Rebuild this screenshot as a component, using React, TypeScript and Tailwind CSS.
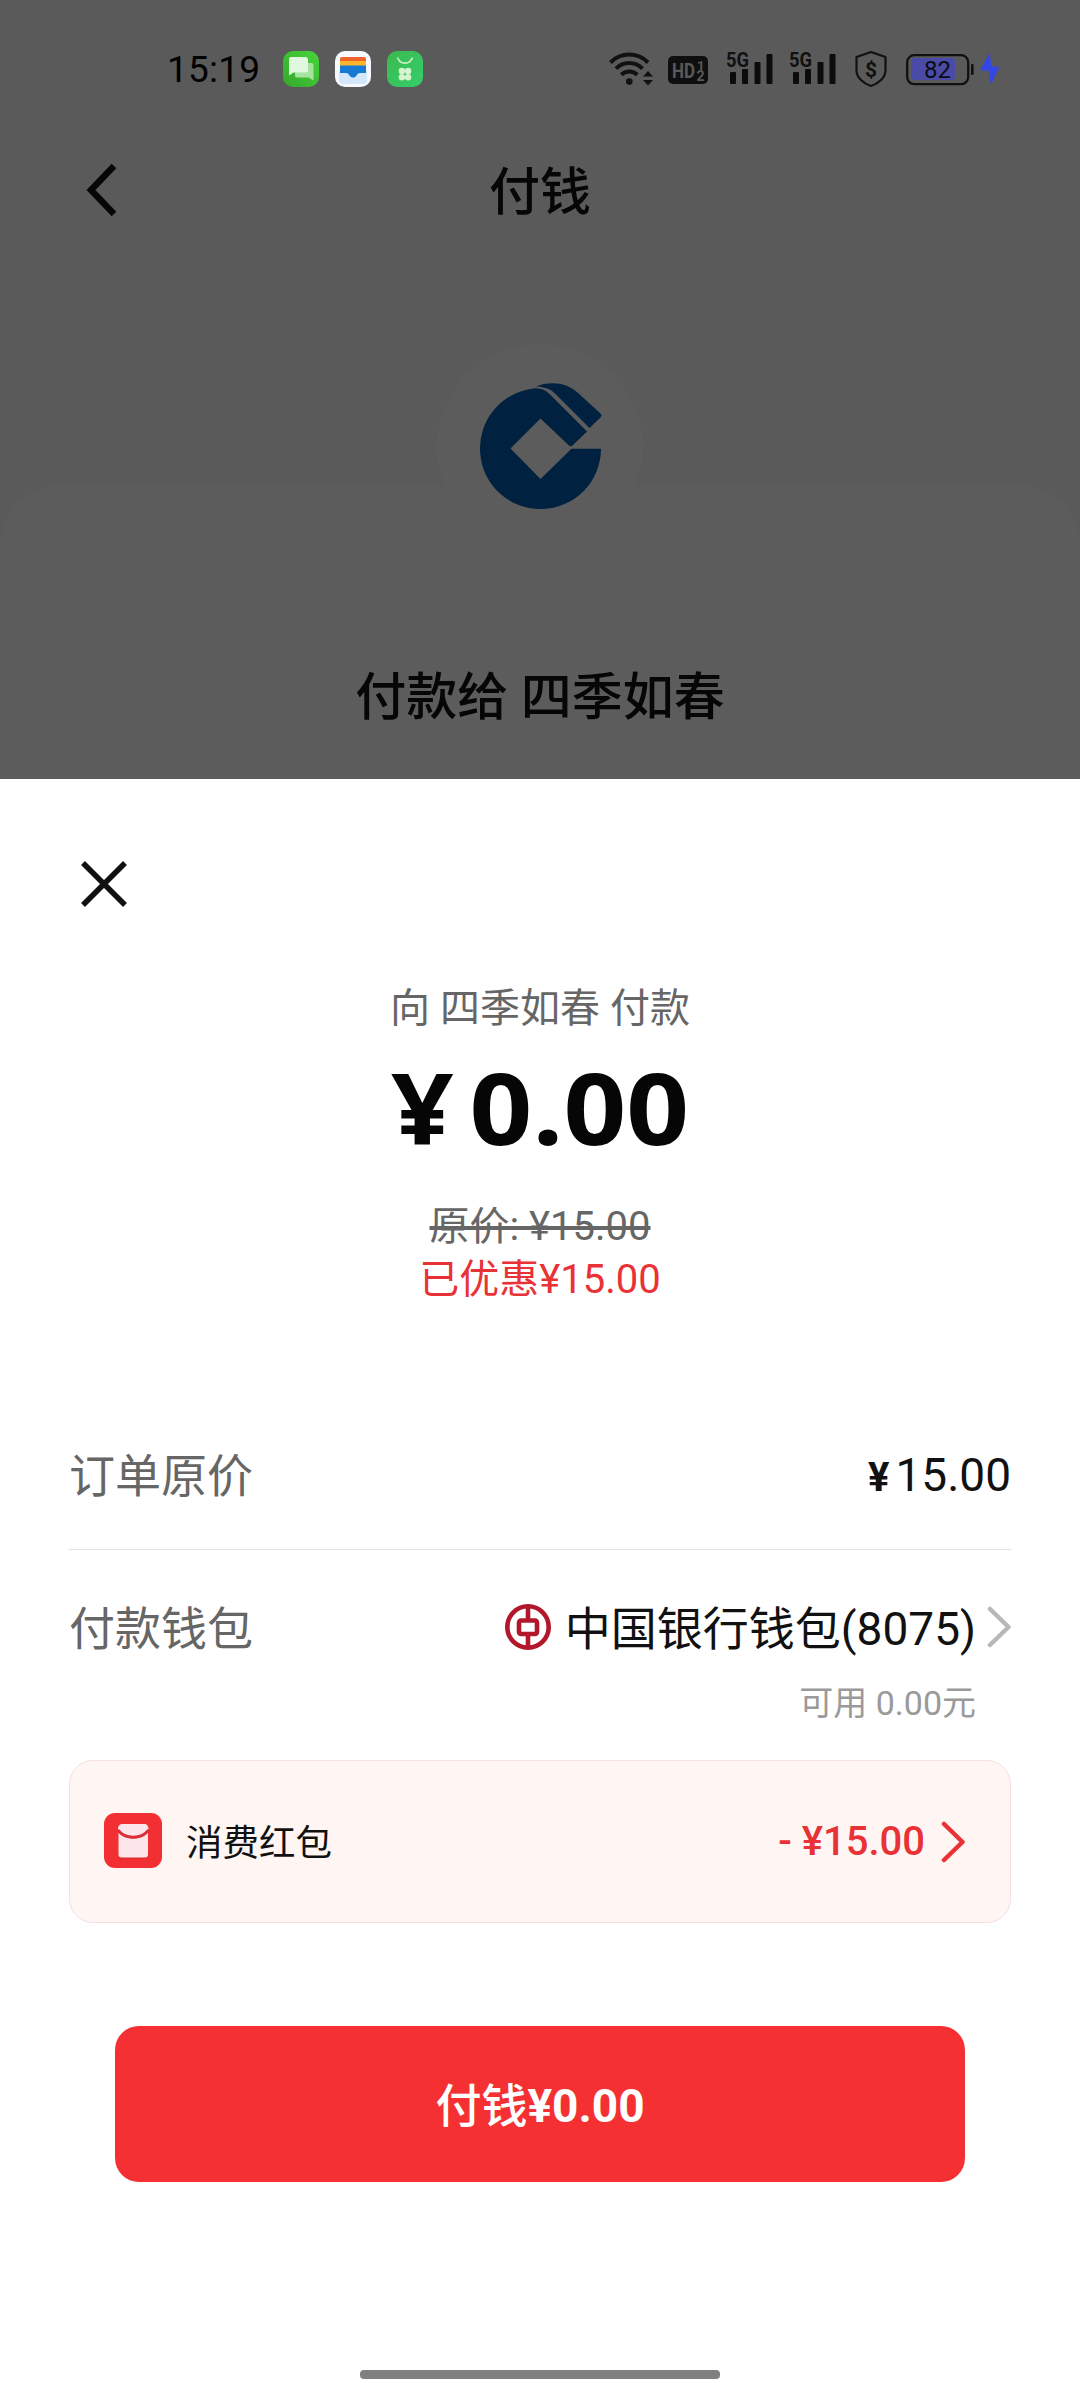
import React from 'react';

const payee = '四季如春';

const MessageAppIcon = () => (
  <svg width="36" height="36" viewBox="0 0 36 36">
    <defs>
      <linearGradient id="msg" x1="1" y1="0" x2="0" y2="1">
        <stop offset="0" stopColor="#46d63a" />
        <stop offset="1" stopColor="#35a82c" />
      </linearGradient>
    </defs>
    <rect width="36" height="36" rx="10" fill="url(#msg)" />
    <path d="M14 12h14.5a2 2 0 0 1 2 2v15.500l-5-3H14a2 2 0 0 1-2-2V14a2 2 0 0 1 2-2z" fill="#a5e39f" />
    <path d="M8 6h14.500a2.500 2.500 0 0 1 2.500 2.500V19a2.500 2.500 0 0 1-2.500 2.500H10.500L6 24.500V8a2 2 0 0 1 2-2z" fill="#e2f7df" />
  </svg>
);

const WalletAppIcon = () => (
  <svg width="36" height="36" viewBox="0 0 36 36">
    <rect width="36" height="36" rx="10" fill="#f5f8fd" />
    <path d="M4 20h28v9a4 4 0 0 1-4 4H8a4 4 0 0 1-4-4z" fill="#d3e8fa" />
    <path d="M5 11V8a2 2 0 0 1 2-2h22a2 2 0 0 1 2 2v3z" fill="#f0622a" />
    <path d="M5 10h26v6H5z" fill="#fcb62c" />
    <path d="M5 14.500h26V22h-6c-2 0-2.500 1-3.500 2.500-1.600 2.800-5.400 2.800-7 0C13.500 23 13 22 11 22H5z" fill="#1779d4" />
  </svg>
);

const CloverAppIcon = () => (
  <svg width="36" height="36" viewBox="0 0 36 36">
    <defs>
      <linearGradient id="clover" x1="0" y1="0" x2="1" y2="1">
        <stop offset="0" stopColor="#3cb84e" />
        <stop offset="1" stopColor="#35cf6c" />
      </linearGradient>
    </defs>
    <rect width="36" height="36" rx="10" fill="url(#clover)" />
    <path d="M10.500 6.500c2.500 7.500 12.500 7.500 15 0" fill="none" stroke="#c9f2c4" strokeWidth="1.600" />
    <g fill="#d5f5cf">
      <circle cx="14.900" cy="20" r="3.200" />
      <circle cx="21.100" cy="20" r="3.200" />
      <circle cx="14.900" cy="26.200" r="3.200" />
      <circle cx="21.100" cy="26.200" r="3.200" />
    </g>
  </svg>
);

const WifiIcon = () => (
  <svg width="44" height="36" viewBox="0 0 44 36">
    <g fill="none" stroke="#111" strokeWidth="4">
      <path d="M1.500 11.500a26 26 0 0 1 37.500 0" />
      <path d="M7 17.700a18.500 18.500 0 0 1 26.500 0" />
      <path d="M12.300 23.700a11.500 11.500 0 0 1 16 0" />
    </g>
    <circle cx="20.300" cy="30.600" r="3.300" fill="#111" />
    <path d="M34 25.500l5-5.500 5 5.500zM34 29h10l-5 5.500z" fill="#111" />
  </svg>
);

const HdIcon = () => (
  <svg width="40" height="28" viewBox="0 0 40 28">
    <rect width="40" height="28" rx="5" fill="#0f0f0f" />
    <text x="4" y="21.500" fontFamily="Roboto, sans-serif" fontWeight="700" fontSize="20" textLength="23" lengthAdjust="spacingAndGlyphs" fill="#5a5a5a">HD</text>
    <text x="29" y="13.500" fontFamily="Roboto, sans-serif" fontWeight="700" fontSize="13" fill="#5a5a5a">1</text>
    <text x="28.500" y="24.800" fontFamily="Roboto, sans-serif" fontWeight="700" fontSize="14" fill="#5a5a5a">2</text>
  </svg>
);

const SignalIcon = () => (
  <svg width="47" height="48" viewBox="0 -6 47 48">
    <text x="0" y="16" fontFamily="Roboto, sans-serif" fontWeight="700" fontSize="20" textLength="23" lengthAdjust="spacingAndGlyphs" fill="#111">5G</text>
    <g fill="#0c0c0c">
      <rect x="4" y="21" width="6" height="12" rx="1" />
      <rect x="16" y="18" width="6" height="15" rx="1" />
      <rect x="28.500" y="11" width="6" height="22" rx="1" />
      <rect x="40.500" y="3" width="6" height="30" rx="1" />
    </g>
  </svg>
);

const ShieldIcon = () => (
  <svg width="34" height="38" viewBox="0 0 34 38">
    <path d="M17 2l14.500 5v13c0 8-7 13.500-14.500 16C9.500 33.500 2.500 28 2.500 20V7z" fill="none" stroke="#111" strokeWidth="2.200" strokeLinejoin="round" />
    <text x="17" y="26.500" textAnchor="middle" fontFamily="Roboto, sans-serif" fontWeight="700" fontSize="21" fill="#111">$</text>
  </svg>
);

const BatteryIcon = () => (
  <svg width="96" height="36" viewBox="0 0 96 36">
    <rect x="5" y="7" width="44" height="22" rx="3" fill="#4a4ba6" />
    <rect x="1.200" y="4.200" width="61" height="29" rx="7" fill="none" stroke="#111" strokeWidth="2.300" />
    <rect x="65" y="13" width="2.600" height="11" rx="1" fill="#111" />
    <text x="31.500" y="27" textAnchor="middle" fontFamily="Roboto, sans-serif" fontSize="24" fill="#0b0b14">82</text>
    <path d="M83.500 1.500L74 19.500h8.500L85 34l8.500-18.500h-8z" fill="#3446e4" />
  </svg>
);

const CcbLogo = () => (
  <svg width="122" height="128" viewBox="0 0 122 128" fill="#00213f">
    <path d="M53.500 5.500C60 4.700 65.500 7 70 11.500l37 37L92.500 62.500a3 3 0 0 1-3.500 0L60.500 35.500 30.500 65.500l30 30.500L91.500 65.800h29.500A60.500 60.500 0 1 1 53.500 5.500z" />
    <path d="M55.500 3.500C70-2.500 87-.500 97.500 9.500L120.500 30.500a3 3 0 0 1 0 4L109.500 45 75 10.500C70 5.500 63 3.500 55.500 3.500z" />
  </svg>
);

const BocLogo = () => (
  <svg width="46" height="46" viewBox="0 0 46 46" fill="none" stroke="#b3172b">
    <circle cx="23" cy="23" r="20.700" strokeWidth="4.600" />
    <rect x="14" y="16.500" width="18" height="13.500" rx="2" strokeWidth="4.600" />
    <path d="M23 3v12M23 31v12" strokeWidth="4.600" />
  </svg>
);

const RedPacketIcon = () => (
  <svg width="58" height="55" viewBox="0 0 58 55">
    <rect width="58" height="55" rx="11" fill="#f23033" />
    <rect x="14.500" y="14" width="29.500" height="32" rx="4" fill="#cf262c" opacity="0.5" />
    <path d="M14.500 19.500c7 8 22.500 8 29.500 0V41.500a3 3 0 0 1-3 3H17.500a3 3 0 0 1-3-3z" fill="#fde6e9" />
    <path d="M14 16c0-3 1.500-5 4-5h22.500c2.500 0 4 2 4 5-6 9.500-24.500 9.500-30.500 0z" fill="#fde6e9" />
    <path d="M14 17c6.500 9.500 24 9.500 30.500 0" fill="none" stroke="#dc2f3a" strokeWidth="3" />
  </svg>
);

const Chevron = ({ color }: { color: string }) => (
  <svg width="24" height="42" viewBox="0 0 24 42" fill="none" stroke={color} strokeWidth="4.500" strokeLinecap="round" strokeLinejoin="round">
    <path d="M3 3l18.500 18L3 39" />
  </svg>
);

const StatusBar = () => (
  <div className="flex h-[138px] items-center pl-[167px] pr-[78px]">
    <span className="w-[116px] pt-0.5 text-[37px] leading-[44px] tracking-[0.2px] text-black">15:19</span>
    <div className="flex gap-4">
      <MessageAppIcon />
      <WalletAppIcon />
      <CloverAppIcon />
    </div>
    <div className="ml-auto flex items-center">
      <WifiIcon />
      <div className="ml-[15px] mt-px"><HdIcon /></div>
      <div className="ml-[18px]"><SignalIcon /></div>
      <div className="ml-4"><SignalIcon /></div>
      <div className="ml-[18px]"><ShieldIcon /></div>
      <div className="ml-[18px]"><BatteryIcon /></div>
    </div>
  </div>
);

const App: React.FC = () => {
  return (
    <div className="flex h-[2400px] w-[1080px] flex-col overflow-hidden bg-white font-['Roboto','Noto_Sans_CJK_SC',sans-serif]">
      {/* dimmed page behind the sheet */}
      <div className="h-[779px] overflow-hidden bg-[#5a5a5a]">
        <StatusBar />
        <header className="grid h-[104px] grid-cols-3 items-center px-[84px]">
          <svg width="36" height="56" viewBox="0 0 36 56" fill="none" stroke="#060606" strokeWidth="6.500">
            <path d="M30 4L7 28l23 24" />
          </svg>
          <h1 className="pt-1.5 text-center text-[51px] font-medium leading-[60px] text-[#060606]">付钱</h1>
        </header>
        <div className="mt-[243px] flex h-[294px] flex-col items-center rounded-t-[60px] bg-[#5c5c5c]">
          <div className="-mt-[141px] flex h-[206px] w-[206px] shrink-0 items-center justify-center rounded-full bg-[#5c5c5c] pl-0.5">
            <CcbLogo />
          </div>
          <p className="mt-[118px] text-[51px] font-medium leading-[60px] text-[#060606]">付款给 {payee}</p>
        </div>
      </div>

      {/* payment sheet */}
      <div className="flex flex-1 flex-col bg-white px-[69px]">
        <div className="mt-[82px] pl-3">
          <svg width="46" height="46" viewBox="0 0 46 46" fill="none" stroke="#111" strokeWidth="5.500">
            <path d="M2 2l42 42M44 2L2 44" />
          </svg>
        </div>

        <div className="mt-[77px] flex flex-col items-center">
          <p className="text-[40px] leading-[50px] text-[#666]">向 {payee} 付款</p>
          <p className="mt-[19px] flex scale-x-[1.12] font-['Open_Sans','Noto_Sans_CJK_SC',sans-serif] text-[98px] font-bold leading-[108px] text-[#060606]">
            ¥<span className="ml-3.5">0.00</span>
          </p>
          <p className="mt-[39px] text-[40px] leading-[53px] text-[#666] line-through">原价: ¥15.00</p>
          <p className="text-[40px] leading-[53px] text-[#e93236]">已优惠¥15.00</p>
        </div>

        <div className="mt-[98px] flex h-[146px] items-center justify-between border-b border-[#e2e2e2] text-[46px]">
          <span className="text-[#666]">订单原价</span>
          <span className="flex items-baseline pb-0.5 text-[#111]">
            <span className="mr-1.5 text-[40px] font-bold leading-[40px]">¥</span>15.00
          </span>
        </div>

        <div className="mt-[42px] flex h-[70px] items-center text-[46px] text-[#111]">
          <span className="pt-1 text-[#666]">付款钱包</span>
          <div className="ml-auto mr-[14px]"><BocLogo /></div>
          <span className="pt-1">中国银行钱包(8075)</span>
          <div className="ml-[11px]"><Chevron color="#b8b8b8" /></div>
        </div>
        <p className="mt-4 pr-[35px] text-right text-[34px] leading-[50px] text-[#9a9a9a]">可用 0.00元</p>

        <div className="mt-8 flex h-[163px] items-center rounded-[24px] border border-[#f5dfe2] bg-[#fff6f4] pl-[34px] pr-[45px]">
          <div className="pb-0.5"><RedPacketIcon /></div>
          <span className="ml-6 pt-1.5 text-[36.5px] text-[#111]">消费红包</span>
          <span className="ml-auto text-[40px] font-medium text-[#e93236]">- ¥15.00</span>
          <div className="ml-4"><Chevron color="#e93236" /></div>
        </div>

        <button className="mx-[46px] mt-[103px] h-[156px] rounded-[24px] bg-[#f53033] pt-1 text-[46px] font-bold text-white">
          <span className="font-medium">付钱</span>¥0.00
        </button>

        <div className="mx-auto mb-[21px] mt-auto h-[9px] w-[360px] rounded-[4px] bg-[#808080]" />
      </div>
    </div>
  );
};

export default App;
